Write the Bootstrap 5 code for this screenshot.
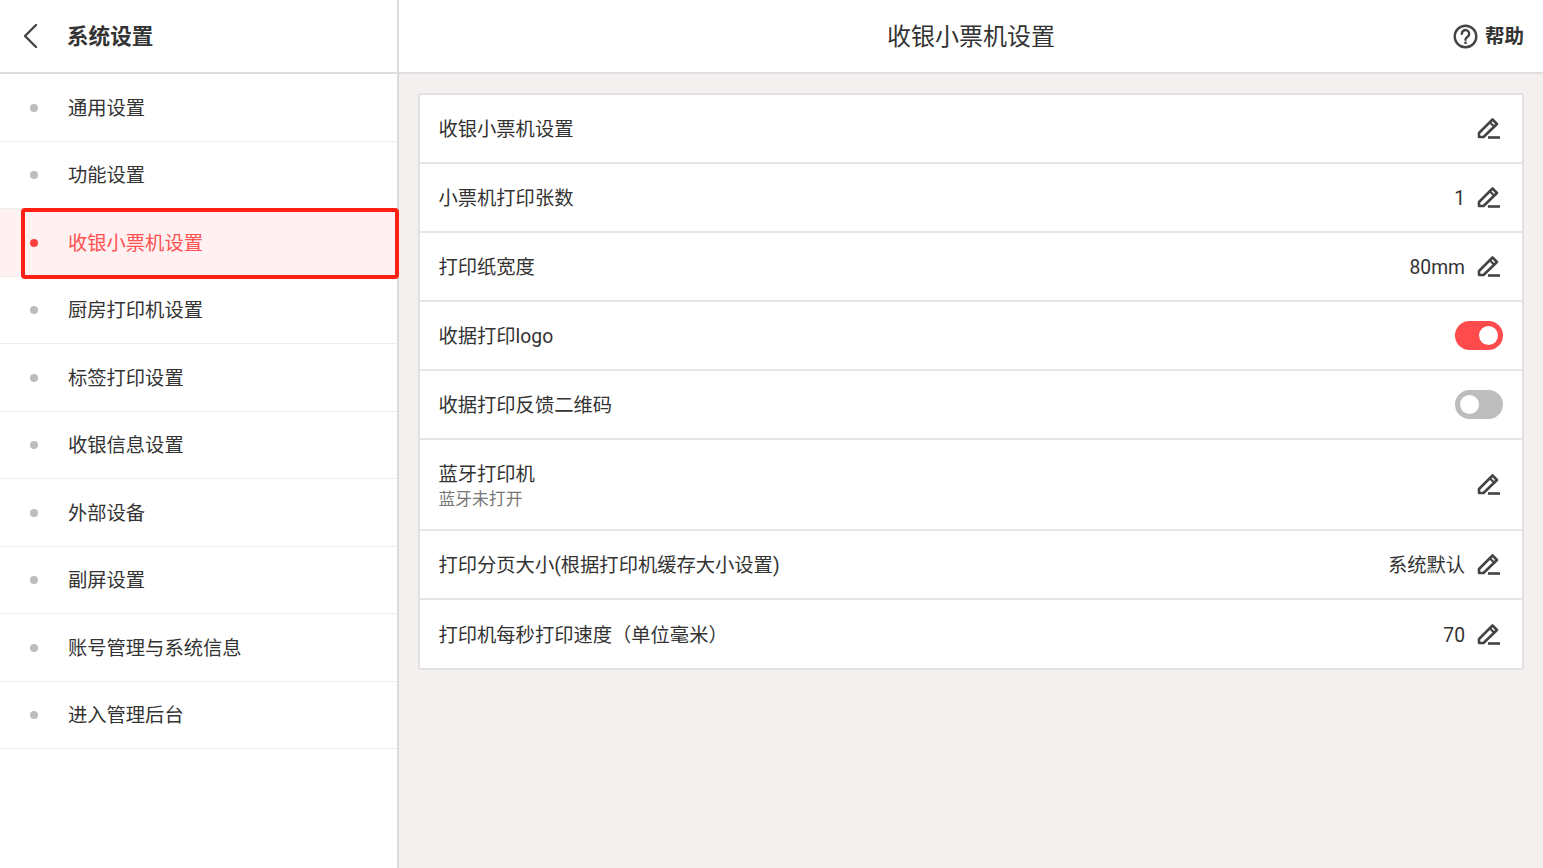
<!DOCTYPE html>
<html lang="zh-CN">
<head>
<meta charset="utf-8">
<title>收银小票机设置</title>
<link href="https://cdn.jsdelivr.net/npm/bootstrap@5.3.0/dist/css/bootstrap.min.css" rel="stylesheet">
<style>
html,body{height:100%;margin:0}
body{font-family:Roboto,"Noto Sans CJK SC",sans-serif;color:#333;background:#f4f0ef;overflow:hidden}
.shell{height:868px}
.side{width:399px;flex:none;background:#fff;border-right:2px solid #dcdcdc;position:relative}
.side-head{height:74px;border-bottom:2px solid #dedede;padding-left:22px}
.side-title{font-size:21.6px;font-weight:700;margin-left:28px;color:#333;padding-top:2px}
.menu-row{height:67.5px;border-bottom:1px solid #eeeeee;padding:4px 0 0 30px;font-size:19.3px;color:#333}
.menu-row.on{background:#fff1f1;color:#ff5050}
.dot{width:8px;height:8px;border-radius:50%;background:#bdbdbd;margin:-3px 30px 0 0;flex:none}
.on .dot{background:#ff4040}
.hilite{position:absolute;left:21px;top:208px;width:378px;height:71px;border:4px solid #ff2015;border-radius:4px;pointer-events:none}
.main-head{height:74px;background:#fff;border-bottom:2px solid #dedede;position:relative;font-size:24px;color:#333}
.head-title{padding-top:1px}
.help{position:absolute;right:19px;top:0;height:72px;font-size:19.5px;font-weight:500;color:#333;gap:7px}
.help-txt{padding-top:2px;font-weight:700}
.sheet{margin:19px 19px 0 19px;background:#fff;border:2px solid #e2e0e0;border-radius:3px}
.set-row{height:69px;padding:0 19px 0 18.500px;border-bottom:2px solid #e6e6e6;font-size:19.3px;color:#333}
.set-row:last-child{border-bottom:0;height:68px}
.set-row.tall{height:91px}
.txt{padding-top:4px}
.txt-pair{padding-top:2px}
.sub-txt{font-size:16.8px;color:#777;line-height:22px}
.main-txt{line-height:27px}
.val{margin-right:11px;font-size:19.3px;padding-top:4px}
.pen{width:25px;height:25px;margin-right:2px;flex:none}
.tog{width:48px;height:29px;border-radius:15px;background:#ff4b4b;position:relative}
.tog::after{content:"";position:absolute;top:5px;right:5px;width:19px;height:19px;border-radius:50%;background:#fff}
.tog.off{background:#bdbdbd}
.tog.off::after{right:auto;left:5px}
</style>
</head>
<body>
<svg width="0" height="0" class="d-none"><symbol id="pen-ico" viewBox="0 0 25 25"><path d="M3 21V17L16.500 3.500l4.500 4.500L7.500 21z" fill="none" stroke="#444" stroke-width="2.600" stroke-linejoin="round"/><path d="M13.800 6.200l4.500 4.500" fill="none" stroke="#444" stroke-width="2.200"/><path d="M12 21.500h12" fill="none" stroke="#444" stroke-width="2.600"/></symbol></svg>
<div class="shell d-flex">
  <aside class="side">
    <div class="side-head d-flex align-items-center">
      <svg width="17" height="26" viewBox="0 0 17 26" fill="none" stroke="#444" stroke-width="2.400" stroke-linecap="round" stroke-linejoin="round"><path d="M14 2 3 13l11 11"/></svg>
      <span class="side-title">系统设置</span>
    </div>
    <div class="menu-row d-flex align-items-center"><i class="dot"></i>通用设置</div>
    <div class="menu-row d-flex align-items-center"><i class="dot"></i>功能设置</div>
    <div class="menu-row on d-flex align-items-center"><i class="dot"></i>收银小票机设置</div>
    <div class="menu-row d-flex align-items-center"><i class="dot"></i>厨房打印机设置</div>
    <div class="menu-row d-flex align-items-center"><i class="dot"></i>标签打印设置</div>
    <div class="menu-row d-flex align-items-center"><i class="dot"></i>收银信息设置</div>
    <div class="menu-row d-flex align-items-center"><i class="dot"></i>外部设备</div>
    <div class="menu-row d-flex align-items-center"><i class="dot"></i>副屏设置</div>
    <div class="menu-row d-flex align-items-center"><i class="dot"></i>账号管理与系统信息</div>
    <div class="menu-row d-flex align-items-center"><i class="dot"></i>进入管理后台</div>
    <div class="hilite"></div>
  </aside>
  <main class="flex-grow-1">
    <div class="main-head d-flex align-items-center justify-content-center">
      <span class="head-title">收银小票机设置</span>
      <div class="help d-flex align-items-center">
        <svg width="25" height="25" viewBox="0 0 25 25" fill="none" stroke="#444" stroke-width="2.400"><circle cx="12.500" cy="12.500" r="10.800"/><path d="M8.800 9.800a3.700 3.700 0 1 1 5.800 3c-1.400.9-2.100 1.500-2.100 3" stroke-linecap="round"/><circle cx="12.500" cy="18.800" r="1.400" fill="#444" stroke="none"/></svg>
        <span class="help-txt">帮助</span>
      </div>
    </div>
    <div class="sheet">
      <div class="set-row d-flex align-items-center justify-content-between">
        <span class="txt">收银小票机设置</span>
        <div class="d-flex align-items-center"><svg class="pen"><use href="#pen-ico"/></svg></div>
      </div>
      <div class="set-row d-flex align-items-center justify-content-between">
        <span class="txt">小票机打印张数</span>
        <div class="d-flex align-items-center"><span class="val">1</span><svg class="pen"><use href="#pen-ico"/></svg></div>
      </div>
      <div class="set-row d-flex align-items-center justify-content-between">
        <span class="txt">打印纸宽度</span>
        <div class="d-flex align-items-center"><span class="val">80mm</span><svg class="pen"><use href="#pen-ico"/></svg></div>
      </div>
      <div class="set-row d-flex align-items-center justify-content-between">
        <span class="txt">收据打印logo</span>
        <div class="tog"></div>
      </div>
      <div class="set-row d-flex align-items-center justify-content-between">
        <span class="txt">收据打印反馈二维码</span>
        <div class="tog off"></div>
      </div>
      <div class="set-row tall d-flex align-items-center justify-content-between">
        <div class="txt-pair"><div class="main-txt">蓝牙打印机</div><div class="sub-txt">蓝牙未打开</div></div>
        <div class="d-flex align-items-center"><svg class="pen"><use href="#pen-ico"/></svg></div>
      </div>
      <div class="set-row d-flex align-items-center justify-content-between">
        <span class="txt">打印分页大小(根据打印机缓存大小设置)</span>
        <div class="d-flex align-items-center"><span class="val">系统默认</span><svg class="pen"><use href="#pen-ico"/></svg></div>
      </div>
      <div class="set-row d-flex align-items-center justify-content-between">
        <span class="txt">打印机每秒打印速度（单位毫米）</span>
        <div class="d-flex align-items-center"><span class="val">70</span><svg class="pen"><use href="#pen-ico"/></svg></div>
      </div>
    </div>
  </main>
</div>
<script src="https://cdn.jsdelivr.net/npm/bootstrap@5.3.0/dist/js/bootstrap.bundle.min.js"></script>
</body>
</html>
